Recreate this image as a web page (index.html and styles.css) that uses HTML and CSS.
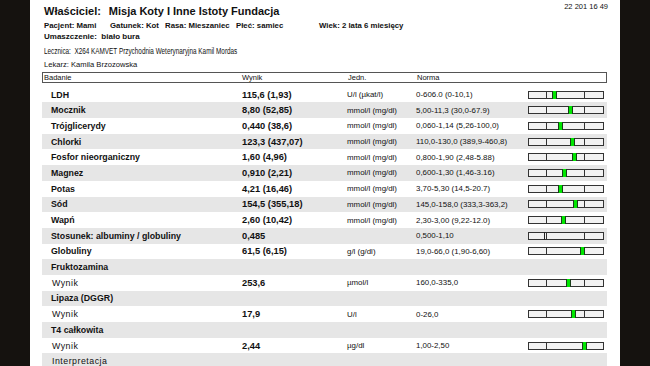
FILE: index.html
```html
<!DOCTYPE html>
<html lang="pl">
<head>
<meta charset="utf-8">
<title>Wyniki badań</title>
<link rel="stylesheet" href="styles.css">
</head>
<body>
<div class="page">
  <div class="head">
    <div class="title"><span class="lbl">Właściciel:</span>Misja Koty I Inne Istoty Fundacja</div>
    <div class="date">22 201 16 49</div>
  </div>
  <div class="info bold l1">
    <span class="f1">Pacjent: Mami</span><span class="f2">Gatunek: Kot</span><span class="f3">Rasa: Mieszaniec</span><span class="f4">Płeć: samiec</span><span>Wiek: 2 lata 6 miesięcy</span>
  </div>
  <div class="info bold l2">Umaszczenie:&nbsp; biało bura</div>
  <div class="info narrow l3">Lecznica:&nbsp; X264 KAMVET Przychodnia Weterynaryjna Kamil Mordas</div>
  <div class="info l4">Lekarz: Kamila Brzozowska</div>

  <div class="table">
    <div class="thead">
      <div class="c1">Badanie</div><div>Wynik</div><div>Jedn.</div><div>Norma</div><div></div>
    </div>
    <div class="rows">
      <div class="row"><div class="c1 name">LDH</div><div class="val">115,6 (1,93)</div><div>U/l (µkat/l)</div><div>0-606.0 (0-10,1)</div><div class="barcell"><div class="bar"><i class="mk" style="left:23px"></i></div></div></div>
      <div class="row g"><div class="c1 name">Mocznik</div><div class="val">8,80 (52,85)</div><div>mmol/l (mg/dl)</div><div>5,00-11,3 (30,0-67.9)</div><div class="barcell"><div class="bar"><i class="mk" style="left:39px"></i></div></div></div>
      <div class="row"><div class="c1 name">Trójglicerydy</div><div class="val">0,440 (38,6)</div><div>mmol/l (mg/dl)</div><div>0,060-1,14 (5,26-100,0)</div><div class="barcell"><div class="bar"><i class="mk" style="left:29px"></i></div></div></div>
      <div class="row g"><div class="c1 name">Chlorki</div><div class="val">123,3 (437,07)</div><div>mmol/l (mg/dl)</div><div>110,0-130,0 (389,9-460,8)</div><div class="barcell"><div class="bar"><i class="mk" style="left:41px"></i></div></div></div>
      <div class="row"><div class="c1 name">Fosfor nieorganiczny</div><div class="val">1,60 (4,96)</div><div>mmol/l (mg/dl)</div><div>0,800-1,90 (2,48-5.88)</div><div class="barcell"><div class="bar"><i class="mk" style="left:43px"></i></div></div></div>
      <div class="row g"><div class="c1 name">Magnez</div><div class="val">0,910 (2,21)</div><div>mmol/l (mg/dl)</div><div>0,600-1,30 (1,46-3.16)</div><div class="barcell"><div class="bar"><i class="mk" style="left:33px"></i></div></div></div>
      <div class="row"><div class="c1 name">Potas</div><div class="val">4,21 (16,46)</div><div>mmol/l (mg/dl)</div><div>3,70-5,30 (14,5-20.7)</div><div class="barcell"><div class="bar"><i class="mk" style="left:29px"></i></div></div></div>
      <div class="row g"><div class="c1 name">Sód</div><div class="val">154,5 (355,18)</div><div>mmol/l (mg/dl)</div><div>145,0-158,0 (333,3-363,2)</div><div class="barcell"><div class="bar"><i class="mk" style="left:44px"></i></div></div></div>
      <div class="row"><div class="c1 name">Wapń</div><div class="val">2,60 (10,42)</div><div>mmol/l (mg/dl)</div><div>2,30-3,00 (9,22-12.0)</div><div class="barcell"><div class="bar"><i class="mk" style="left:32px"></i></div></div></div>
      <div class="row g"><div class="c1 name">Stosunek: albuminy / globuliny</div><div class="val">0,485</div><div></div><div>0,500-1,10</div><div class="barcell"><div class="bar"><i class="ln" style="left:15px"></i></div></div></div>
      <div class="row"><div class="c1 name">Globuliny</div><div class="val">61,5 (6,15)</div><div>g/l (g/dl)</div><div>19,0-66,0 (1,90-6,60)</div><div class="barcell"><div class="bar"><i class="mk" style="left:51px"></i></div></div></div>
      <div class="row g"><div class="c1 name">Fruktozamina</div><div></div><div></div><div></div><div></div></div>
      <div class="row"><div class="c1 sub">Wynik</div><div class="val">253,6</div><div>µmol/l</div><div>160,0-335,0</div><div class="barcell"><div class="bar"><i class="mk" style="left:37px"></i></div></div></div>
      <div class="row g"><div class="c1 name">Lipaza (DGGR)</div><div></div><div></div><div></div><div></div></div>
      <div class="row"><div class="c1 sub">Wynik</div><div class="val">17,9</div><div>U/l</div><div>0-26,0</div><div class="barcell"><div class="bar"><i class="mk" style="left:42px"></i></div></div></div>
      <div class="row g"><div class="c1 name">T4 całkowita</div><div></div><div></div><div></div><div></div></div>
      <div class="row"><div class="c1 sub">Wynik</div><div class="val">2,44</div><div>µg/dl</div><div>1,00-2,50</div><div class="barcell"><div class="bar"><i class="mk" style="left:53px"></i></div></div></div>
      <div class="row g"><div class="c1 sub">Interpretacja</div><div></div><div></div><div></div><div></div></div>
    </div>
  </div>
</div>
</body>
</html>
```

FILE: styles.css
```css
html, body {
  margin: 0;
  padding: 0;
  background: #15120f;
  height: 366px;
  overflow: hidden;
}
body {
  font-family: "Liberation Sans", Arial, sans-serif;
  color: #111;
}
.page {
  margin-left: 30px;
  width: 590px;
  height: 366px;
  background: #fff;
  padding: 0 13px 0 14px;
  box-sizing: border-box;
}
.head {
  display: flex;
  justify-content: space-between;
  align-items: flex-start;
  height: 19.5px;
}
.title {
  font-size: 11px;
  font-weight: bold;
  line-height: 16px;
  margin-top: 3px;
  white-space: nowrap;
}
.title .lbl {
  margin-right: 8px;
}
.date {
  font-size: 7.5px;
  line-height: 12px;
  margin-top: 1px;
  margin-right: -1px;
}
.info {
  font-size: 8px;
  white-space: nowrap;
}
.bold { font-weight: bold; }
.narrow {
  font-size: 8.4px;
  transform: scaleX(0.76);
  transform-origin: 0 50%;
}
.l1 {
  line-height: 11px;
  display: flex;
  font-size: 7.8px;
}
.l1 span { flex: none; }
.l1 .f1 { width: 66px; }
.l1 .f2 { width: 55px; }
.l1 .f3 { width: 71px; }
.l1 .f4 { width: 83px; }
.l2 { line-height: 11px; }
.l3 { line-height: 14px; margin-top: 2px; }
.l4 { line-height: 14px; font-size: 7.6px; }
.table {
  margin-left: -2px;
  width: 565px;
}
.thead, .row {
  display: grid;
  grid-template-columns: 200px 105px 69px 112px 79px;
  align-items: center;
}
.thead {
  height: 11px;
  box-sizing: border-box;
  border: 1px solid #555;
  font-size: 7.5px;
  line-height: 9px;
  margin-bottom: 4.2px;
}
.thead .c1 { padding-left: 1px; }
.thead > div:nth-child(2) { margin-left: -1px; }
.row {
  height: 15.7px;
  font-size: 7.9px;
  white-space: nowrap;
}
.row.g { background: #e6e6e6; }
.row .c1 { padding-left: 9px; }
.row .name { font-weight: bold; font-size: 8.8px; }
.row .sub { padding-left: 10px; font-size: 8.8px; letter-spacing: 0.5px; }
.row .val { font-weight: bold; font-size: 9.3px; }
.barcell {
  display: flex;
  align-items: center;
}
.bar {
  position: relative;
  width: 76px;
  height: 8px;
  box-sizing: border-box;
  border: 1px solid #333;
  background: #f2f2f2;
}
.bar::before, .bar::after {
  content: "";
  position: absolute;
  top: 0;
  bottom: 0;
  width: 1px;
  background: #333;
}
.bar::before { left: 17px; }
.bar::after { left: 55px; }
.mk {
  position: absolute;
  top: -1px;
  bottom: -1px;
  width: 3px;
  background: #00e600;
  border-left: 1px solid #1a3d1a;
  border-right: 1px solid #1a3d1a;
  z-index: 1;
}
.ln {
  position: absolute;
  top: -1px;
  bottom: -1px;
  width: 1px;
  background: #222;
}
```
